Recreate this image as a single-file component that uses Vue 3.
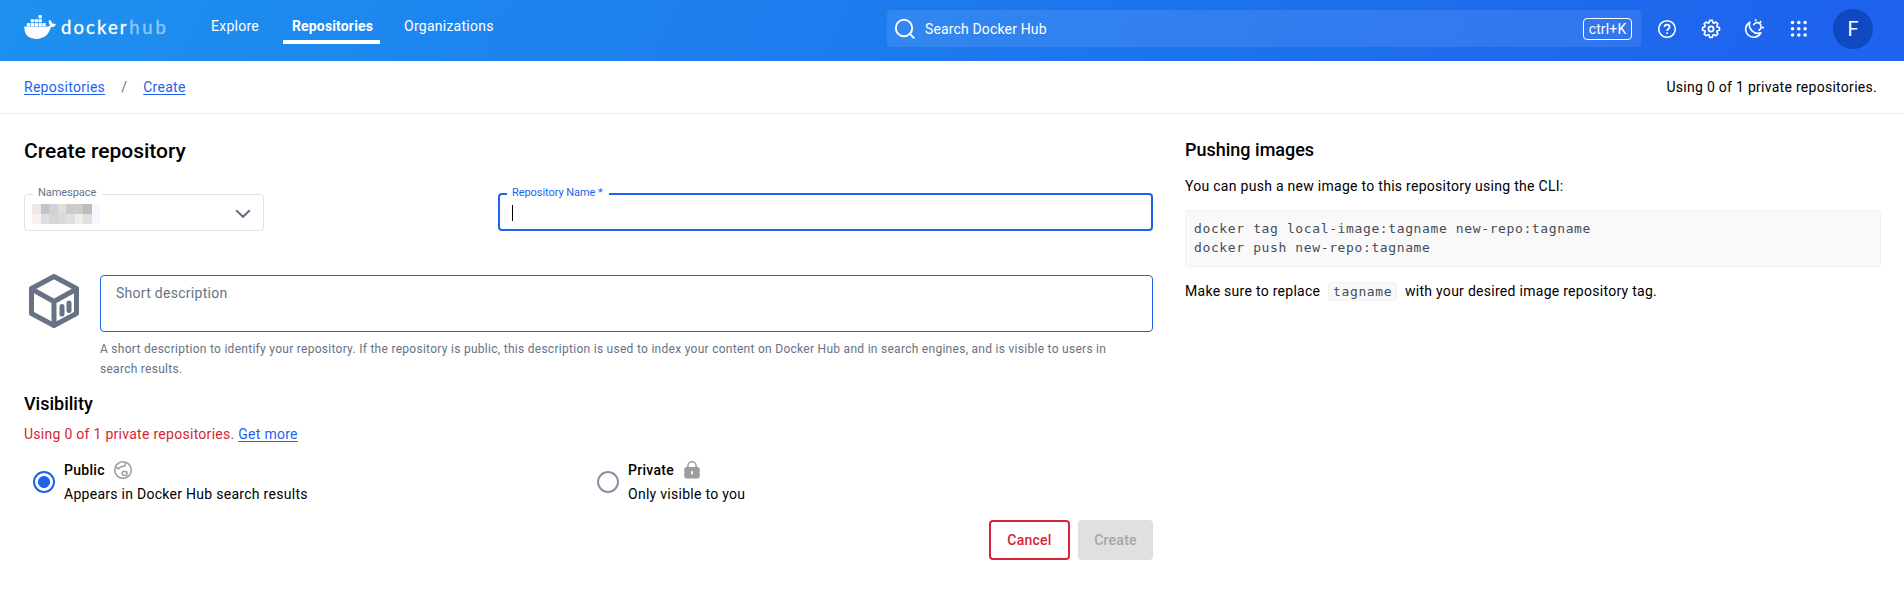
<script setup>
const whaleBoxes = [
  [14.5, 0.2],
  [6.7, 4.2], [10.6, 4.2], [14.5, 4.2],
  [2.8, 8.1], [6.7, 8.1], [10.6, 8.1], [14.5, 8.1], [18.4, 8.1],
]
const gridDots = [0, 6.3, 12.6].flatMap((y) => [0, 6.3, 12.6].map((x) => [x, y]))
const mosaic = [
  ['#eee9e5', '#c4c4c6', '#cfd2d6', '#dededd', '#cbcbcd', '#d0cbc9', '#bdbdbf', '#f6f8ff'],
  ['#f7f2ef', '#dddee1', '#d9d5d3', '#d6dadd', '#dfdfe2', '#eeedec', '#e1dfdf', '#f6f8ff'],
]
</script>

<template>
  <div class="page">
    <header class="top">
      <div class="brand">
        <svg class="whale" width="33" height="25" viewBox="0 0 33 25">
          <rect v-for="(b, i) in whaleBoxes" :key="i" :x="b[0]" :y="b[1]" width="3.3" height="3.1" fill="#fff" />
          <path fill="#fff" d="M.3 11.600h22.600c1.300 0 2.500-.4 3.300-1.100-1.600-1.700-1.900-3.800-1-5.700 1.900 1 2.900 2.300 3 3.900 1.400-.3 2.600-.1 3.600.7-.8 1.900-2.500 2.700-4.900 2.600C24.900 19.500 20.300 23.900 12.200 23.900 4.400 23.900 .1 19.700 .3 11.600z" />
        </svg>
        <span class="word">docker</span><span class="word hub">hub</span>
      </div>
      <nav class="nav">
        <a class="n1">Explore</a>
        <a class="n2 active">Repositories</a>
        <a class="n3">Organizations</a>
      </nav>
      <div class="search">
        <svg width="22" height="22" viewBox="0 0 22 22" fill="none" stroke="#fff" stroke-width="1.900"><circle cx="10" cy="10" r="8.200" /><path d="M15.500 15.500l4.800 4.800" /></svg>
        <span class="ph">Search Docker Hub</span>
        <span class="kbd">ctrl+K</span>
      </div>
      <div class="tools">
        <svg class="tool" width="20" height="20" viewBox="0 0 20 20" fill="none" stroke="#fff" stroke-width="1.600">
          <circle cx="10" cy="10" r="8.300" />
          <path d="M7.500 8.100c0-1.500 1.100-2.500 2.600-2.500s2.500 1 2.500 2.300c0 1.900-2.500 2-2.500 4" />
          <path d="M10.100 13.200v1.800" />
        </svg>
        <svg class="tool" width="20" height="20" viewBox="0 0 20 20" fill="none" stroke="#fff" stroke-width="1.700" stroke-linejoin="round">
          <path d="M8.600 1.800h2.800l.6 2.300 1.100.5 2-1.200 2 2-1.200 2 .5 1.100 2.300.6v2.800l-2.300.6-.5 1.100 1.200 2-2 2-2-1.200-1.100.5-.6 2.300H8.600L8 16.900l-1.100-.5-2 1.200-2-2 1.200-2-.5-1.100-2.300-.6V9.100l2.300-.6.5-1.100-1.200-2 2-2 2 1.200L8 4.100z" transform="translate(0.300 -0.300) scale(.97)" />
          <circle cx="10" cy="10" r="2.600" />
        </svg>
        <svg class="tool moon" width="20" height="20" viewBox="0 0 20 20" fill="none" stroke="#fff" stroke-width="1.600">
          <path d="M5.800 3.200a8 8 0 1 0 11 10.600A8.600 8.600 0 0 1 5.800 3.200z" stroke-linejoin="round" />
          <path d="M9.400 6.200a4 4 0 1 1 5.100 5.200M11.500.2l.5 2.100M17.300 2.100l-1.500 1.700M20 8.600h-2.300" />
        </svg>
        <svg class="tool" width="20" height="20" viewBox="0 0 20 20">
          <circle v-for="(d, i) in gridDots" :key="i" :cx="d[0] + 3.500" :cy="d[1] + 3.500" r="1.750" fill="#fff" />
        </svg>
        <div class="avatar">F</div>
      </div>
    </header>

    <div class="crumbs">
      <div class="path"><a>Repositories</a><span class="slash">/</span><a>Create</a></div>
      <span class="usage">Using 0 of 1 private repositories.</span>
    </div>

    <div class="body">
      <main class="form">
        <h1>Create repository</h1>
        <div class="row">
          <div class="select">
            <span class="label">Namespace</span>
            <div class="mosaic">
              <div v-for="(r, i) in mosaic" :key="i" class="mrow">
                <i v-for="(c, j) in r" :key="j" :style="{ background: c }"></i>
              </div>
            </div>
            <svg width="16" height="10" viewBox="0 0 16 10" fill="none" stroke="#677285" stroke-width="2.100"><path d="M1.200 1.200L8 7.800l6.800-6.600" /></svg>
          </div>
          <div class="name">
            <span class="label">Repository Name *</span>
            <i class="caret"></i>
          </div>
        </div>
        <div class="desc">
          <svg class="cube" width="52" height="56" viewBox="0 0 52 56" fill="none" stroke="#677285" stroke-width="5" stroke-linejoin="round" stroke-linecap="round">
            <path d="M26 3.500L48.500 15.500V40.500L26 52.500L3.500 40.500V15.500z" />
            <path d="M3.500 16L26 28.500L48.500 16M26 28.500V52" />
            <path d="M34 33.500v7.500M41 30v7.500" />
          </svg>
          <div class="dcol">
            <div class="area">Short description</div>
            <p class="help">A short description to identify your repository. If the repository is public, this description is used to index your content on Docker Hub and in search engines, and is visible to users in<br>search results.</p>
          </div>
        </div>
        <h2>Visibility</h2>
        <p class="quota">Using 0 of 1 private repositories. <a>Get more</a></p>
        <div class="options">
          <div class="opt">
            <span class="radio on"></span>
            <div>
              <div class="otitle"><b>Public</b>
                <svg class="globe" width="20" height="20" viewBox="0 0 20 20" fill="none" stroke="#9c9c9c" stroke-width="1.500" stroke-linejoin="round">
                  <circle cx="10" cy="10" r="8.300" />
                  <path d="M2.800 6.800L5.400 8.900L7.600 6.800L11.800 6.200L12.600 2.400M10 11.300l4 .6-.4 3.500-3.500-.2-1.300-1.900z" />
                </svg>
              </div>
              <div class="osub">Appears in Docker Hub search results</div>
            </div>
          </div>
          <div class="opt">
            <span class="radio"></span>
            <div>
              <div class="otitle"><b>Private</b>
                <svg class="lock" width="16" height="18" viewBox="0 0 16 18">
                  <path d="M3.900 8V4.900a4.100 4.100 0 0 1 8.200 0V8" fill="none" stroke="#9c9c9c" stroke-width="1.500" />
                  <rect x=".3" y="6" width="15.400" height="11.500" rx="2" fill="#9c9c9c" />
                  <rect x="7" y="10" width="2" height="3.400" rx=".8" fill="#fff" />
                </svg>
              </div>
              <div class="osub">Only visible to you</div>
            </div>
          </div>
        </div>
        <div class="actions">
          <button class="cancel">Cancel</button>
          <button class="create">Create</button>
        </div>
      </main>
      <aside class="side">
        <h3>Pushing images</h3>
        <p class="lead">You can push a new image to this repository using the CLI:</p>
        <pre>docker tag local-image:tagname new-repo:tagname
docker push new-repo:tagname</pre>
        <p class="note">Make sure to replace <code>tagname</code> with your desired image repository tag.</p>
      </aside>
    </div>
  </div>
</template>

<style>
body { margin: 0; background: #fff; }
</style>

<style scoped>
* { box-sizing: border-box; }
.page { width: 1904px; height: 602px; overflow: hidden; font: 14px/20px Roboto, "Liberation Sans", sans-serif; letter-spacing: .28px; color: #000; background: #fff; }
h1, h2, h3, p, pre { margin: 0; font-weight: 500; }
p { font-weight: 400; }
.top { height: 61px; display: flex; background: linear-gradient(115deg, #1d91ef 0%, #1d63ed 96%); color: #fff; letter-spacing: .15px; }
.brand { width: 203px; padding: 14px 0 0 24px; display: flex; align-items: flex-start; }
.whale { margin: 1px 4px 0 0; flex: none; }
.word { font: 400 18.500px/24px Lato, sans-serif; letter-spacing: 2.100px; margin-top: 1px; -webkit-text-stroke: .3px #fff; }
.hub { opacity: .5; letter-spacing: 2.800px; margin-left: .5px; }
.nav { display: flex; gap: 16px; width: 684px; }
.nav a { height: 44px; padding: 16px 8px 0; border-bottom: 4px solid transparent; }
.nav .active { font-weight: 700; border-color: #fff; width: 97px; padding-left: 9px; }
.n1, .n3 { letter-spacing: .26px; }
.n1 { width: 64px; }
.search { width: 754px; height: 37px; margin-top: 10px; padding: 0 9px 0 7px; border-radius: 4px; background: rgba(255,255,255,.09); display: flex; align-items: center; }
.ph { margin-left: 9px; flex: 1; }
.kbd { width: 49px; height: 22px; border: 1px solid #fff; border-radius: 4px; text-align: center; line-height: 20px; }
.tools { display: flex; align-items: center; margin-left: 16px; height: 58px; }
.tool { margin-right: 24px; flex: none; }
.tool.moon { margin: 0 25px 0 -1px; }
.avatar { width: 40px; height: 40px; border-radius: 50%; background: #1048c2; text-align: center; font-size: 20px; line-height: 40px; }
.crumbs { height: 53px; border-bottom: 1px solid #ededed; padding: 0 27px 0 24px; display: flex; align-items: center; justify-content: space-between; }
a { color: #1d63ed; text-decoration: underline; text-underline-offset: 2px; }
.nav a { color: #fff; text-decoration: none; }
.slash { color: #677285; margin: 0 16px; }
.body { display: flex; padding-left: 24px; }
.form { width: 1129px; }
h1 { font-size: 21px; line-height: 28px; margin-top: 23px; letter-spacing: 0; }
.row { display: flex; justify-content: space-between; margin-top: 28px; }
.select { position: relative; width: 240px; height: 37px; margin-top: 1px; border: 1px solid #e1e2e6; border-radius: 4px; padding: 2px 12px 0 7px; display: flex; align-items: center; justify-content: space-between; }
.label { position: absolute; top: -9px; left: 8px; padding: 0 6px 0 5px; background: #fff; color: #677285; font-size: 11px; line-height: 14px; letter-spacing: -.06px; }
.mrow { display: flex; }
.mrow i { width: 8.500px; height: 10px; }
.name { position: relative; width: 655px; height: 38px; border: 2px solid #1d63ed; border-radius: 4px; }
.name .label { color: #1d63ed; left: 7px; padding: 0 6px 0 5px; }
.caret { display: block; width: 1px; height: 16px; margin: 10px 0 0 12px; background: #000; }
.desc { display: flex; margin-top: 44px; }
.cube { margin: -2px 19px 0 4px; flex: none; }
.dcol { width: 1053px; margin-left: 1px; }
.area { height: 57px; border: 1px solid #1d63ed; border-radius: 4px; padding: 7px 15px; color: #677285; }
.help { margin-top: 7px; color: #677285; font-size: 12px; line-height: 20px; white-space: nowrap; }
h2 { font-size: 18px; line-height: 24px; margin-top: 13px; letter-spacing: 0; }
.quota { margin-top: 8px; color: #d52536; }
.options { display: flex; margin-top: 16px; }
.opt { width: 564px; display: flex; padding-left: 9px; }
.radio { width: 22px; height: 22px; border: 2px solid #8993a5; border-radius: 50%; margin: 11px 9px 0 0; flex: none; }
.radio.on { border-color: #1d63ed; background: radial-gradient(circle, #1d63ed 5.500px, #fff 6.500px); }
.otitle { display: flex; align-items: center; height: 20px; }
.otitle b { font-weight: 500; }
.otitle .globe { margin-left: 8px; }
.otitle .lock { margin-left: 10px; }
.osub { margin-top: 4px; }
.actions { display: flex; justify-content: flex-end; gap: 8px; margin-top: 16px; }
button { font: 500 14px/20px Roboto, sans-serif; letter-spacing: .25px; height: 40px; border-radius: 4px; padding: 0; }
.cancel { width: 81px; border: 2px solid #d52536; background: #fff; color: #d52536; }
.create { width: 75px; border: 0; background: #e0e0e0; color: #a6a6a6; }
.side { width: 696px; margin-left: 32px; }
h3 { font-size: 18px; line-height: 24px; margin-top: 24px; letter-spacing: 0; }
.lead { margin-top: 14px; }
pre { margin-top: 14px; height: 57px; background: #f9f9fa; border: 1px solid #f1f1f2; border-radius: 4px; padding: 8px; font: 400 13px/19px "DejaVu Sans Mono", monospace; letter-spacing: .62px; color: #454c57; }
.note { margin-top: 14px; }
code { font: 400 13px/16px "DejaVu Sans Mono", monospace; letter-spacing: .62px; color: #454c57; background: #f9f9fa; border: 1px solid #f1f1f2; border-radius: 4px; padding: 1px 4px; margin: 0 4px; }
</style>
